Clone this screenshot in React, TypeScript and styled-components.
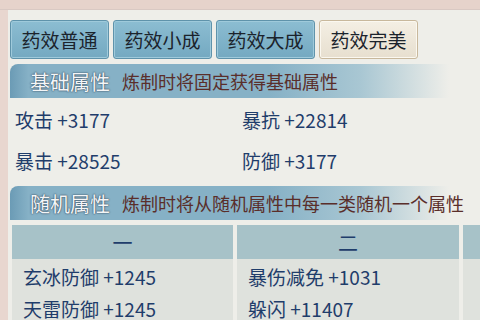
import React from 'react';
import styled, {createGlobalStyle} from 'styled-components';

const Global = createGlobalStyle`
  html, body {
    margin: 0;
    padding: 0;
    width: 480px;
    height: 320px;
    overflow: hidden;
    background: #e8d6cf;
    font-family: "Noto Sans CJK SC", "Noto Sans", sans-serif;
  }
`;

const Frame = styled.div`
  width: 480px;
  height: 320px;
  padding: 10px 0 0 8px;
  box-sizing: border-box;
  background: linear-gradient(#e6d3cb 0, #e6d3cb 9px, #d9c9c3 9px, #d9c9c3 10px, #e8d6cf 10px);
`;

const Panel = styled.div`
  height: 310px;
  background: #eeeee9;
  padding: 10px 0 0 2px;
  box-sizing: border-box;
  overflow: hidden;
`;

const Tabs = styled.div`
  display: flex;
  gap: 4px;
`;

const Tab = styled.div<{$active?: boolean}>`
  width: 99px;
  height: 39px;
  box-sizing: border-box;
  border-radius: 3px;
  display: flex;
  align-items: center;
  justify-content: center;
  font-size: 19px;
  color: #1b232c;
  border: 1px solid ${(p) => (p.$active ? '#c8b89c' : '#5f93ab')};
  background: ${(p) =>
    p.$active
      ? 'linear-gradient(#f4efe4, #e7dfcf)'
      : 'linear-gradient(#8cbdd2, #74a9c1)'};
  box-shadow: inset 0 0 0 1px ${(p) => (p.$active ? '#fbf8f0' : '#9fcadb')};
`;

const SectionHead = styled.div`
  margin-top: 5px;
  height: 34px;
  width: 462px;
  border-top-left-radius: 8px;
  display: flex;
  align-items: center;
  padding-left: 20px;
  box-sizing: border-box;
  white-space: nowrap;
  background: linear-gradient(90deg, #6b9bb5 0, #86b1c6 4%, #86b1c6 56%, #a9c7d3 76%, rgba(238, 238, 233, 0) 95%);
`;

const SectionTitle = styled.span`
  font-size: 20px;
  color: #f4f6f8;
  text-shadow: 0 0 2px #34495c, 0 0 1px #34495c;
  margin-right: 12px;
`;

const SectionNote = styled.span`
  font-size: 18px;
  color: #5a2e2a;
`;

const Stats = styled.div`
  display: grid;
  grid-template-columns: 227px 1fr;
  padding: 1px 0 0 5px;
`;

const Stat = styled.div`
  height: 41px;
  display: flex;
  align-items: center;
  font-size: 19px;
  color: #1f3d6b;
`;

const Table = styled.div`
  margin: 5px 0 0 2px;
  display: grid;
  grid-template-columns: 221px 222px 40px;
  column-gap: 4px;
`;

const Column = styled.div`
  background: #dfe2dd;
  height: 120px;
`;

const ColHead = styled.div`
  height: 34px;
  background: #a7c2c8;
  display: flex;
  align-items: center;
  justify-content: center;
  font-size: 20px;
  color: #1f3d6b;
`;

const Cell = styled.div`
  height: 32px;
  padding-left: 11px;
  display: flex;
  align-items: center;
  font-size: 19px;
  color: #1f3d6b;
  &:first-of-type {
    margin-top: 1px;
  }
`;

const tabs = ['药效普通', '药效小成', '药效大成', '药效完美'];

export default function App() {
  return (
    <>
      <Global />
      <Frame>
        <Panel>
          <Tabs>
            {tabs.map((t, i) => (
              <Tab key={t} $active={i === 3}>
                {t}
              </Tab>
            ))}
          </Tabs>
          <SectionHead>
            <SectionTitle>基础属性</SectionTitle>
            <SectionNote>炼制时将固定获得基础属性</SectionNote>
          </SectionHead>
          <Stats>
            <Stat>攻击 +3177</Stat>
            <Stat>暴抗 +22814</Stat>
            <Stat>暴击 +28525</Stat>
            <Stat>防御 +3177</Stat>
          </Stats>
          <SectionHead>
            <SectionTitle>随机属性</SectionTitle>
            <SectionNote>炼制时将从随机属性中每一类随机一个属性</SectionNote>
          </SectionHead>
          <Table>
            <Column>
              <ColHead>一</ColHead>
              <div>
                <Cell>玄冰防御 +1245</Cell>
                <Cell>天雷防御 +1245</Cell>
              </div>
            </Column>
            <Column>
              <ColHead>二</ColHead>
              <div>
                <Cell>暴伤减免 +1031</Cell>
                <Cell>躲闪 +11407</Cell>
              </div>
            </Column>
            <Column>
              <ColHead />
            </Column>
          </Table>
        </Panel>
      </Frame>
    </>
  );
}
